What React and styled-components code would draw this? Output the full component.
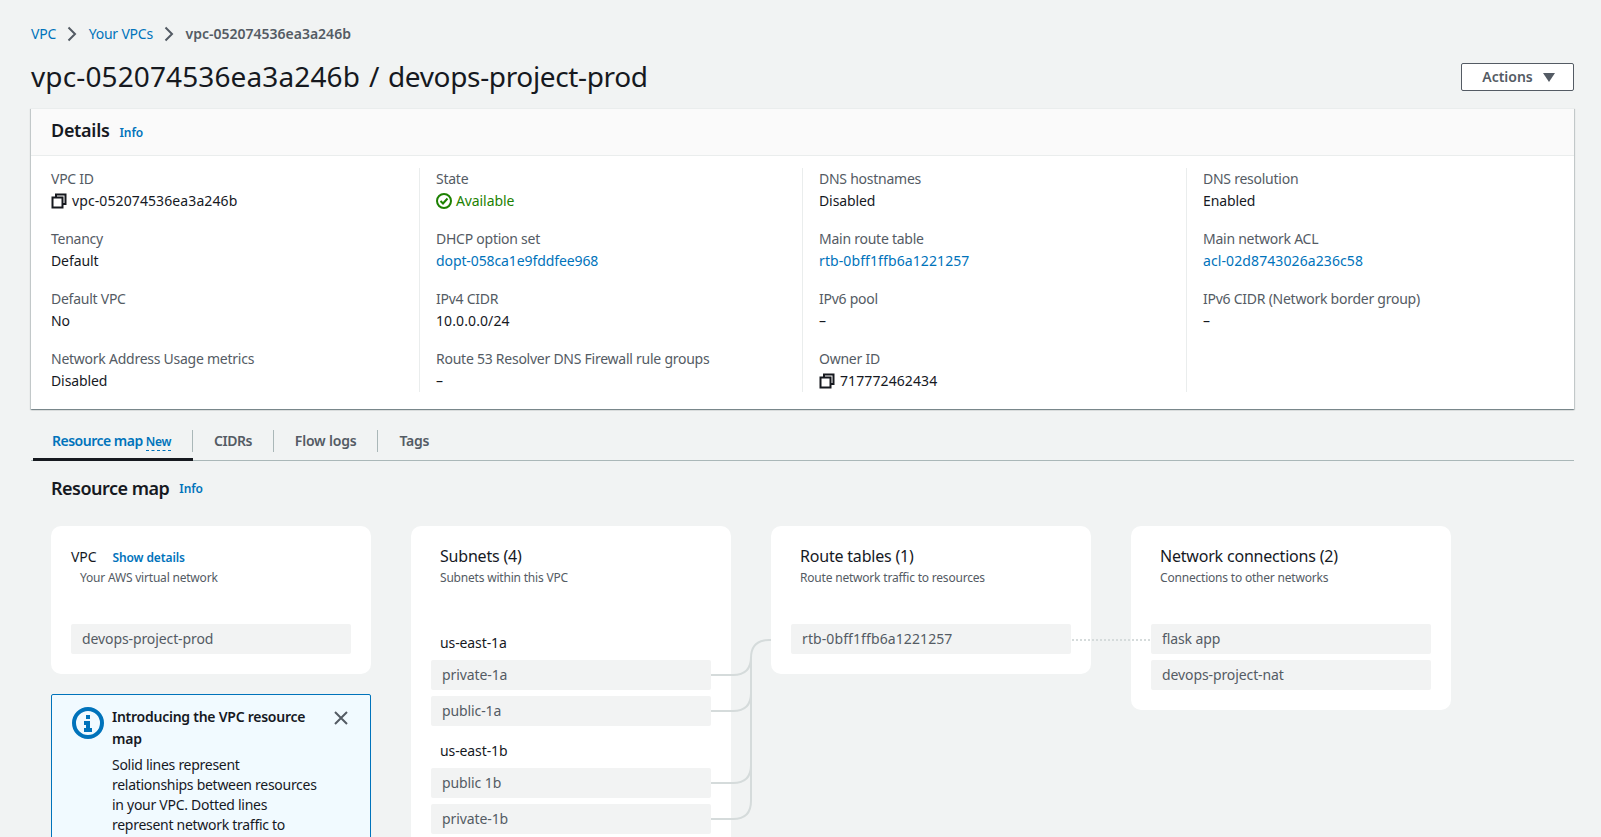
import React from "react";
import styled, { createGlobalStyle } from "styled-components";

const GlobalStyle = createGlobalStyle`
  html, body {
    margin: 0;
    height: 100%;
    overflow: hidden;
    background: #f1f3f3;
  }
  body {
    font-family: "Noto Sans", "Open Sans", Arial, sans-serif;
    font-size: 14px;
    line-height: 22px;
    letter-spacing: -0.1px;
    color: #16191f;
  }
`;

const Page = styled.div`
  height: 837px;
  overflow: hidden;
  padding: 23px 27px 0 31px;
  box-sizing: border-box;
`;

const Breadcrumbs = styled.nav`
  display: flex;
  align-items: center;
  height: 22px;
`;

const Crumb = styled.a`
  color: #0073bb;
  letter-spacing: -0.2px;
`;

const CurrentCrumb = styled.span`
  color: #545b64;
  font-weight: 600;
  letter-spacing: 0;
`;

const CrumbSep = styled.svg`
  width: 10px;
  height: 16px;
  margin: 0 11.5px 0 11px;
  fill: none;
  stroke: #545b64;
  stroke-width: 2;
`;

const PageHeader = styled.header`
  display: flex;
  align-items: center;
  justify-content: space-between;
  margin-top: 13px;
  height: 36px;
`;

const Title = styled.h1`
  margin: 0;
  font-size: 28px;
  line-height: 36px;
  font-weight: 400;
  letter-spacing: -0.35px;
  word-spacing: 2px;
`;

const TitleId = styled.span`
  letter-spacing: 0.12px;
`;

const ActionButton = styled.button`
  display: flex;
  align-items: center;
  justify-content: center;
  gap: 10px;
  width: 113px;
  height: 28px;
  margin-top: 2px;
  padding: 0 0 2px 2px;
  background: #fff;
  border: 1px solid #545b64;
  border-radius: 2px;
  color: #545b64;
  font: 600 14px "Noto Sans", sans-serif;
  letter-spacing: 0;
`;

const Caret = styled.span`
  width: 0;
  height: 0;
  margin-top: 2px;
  border-left: 6px solid transparent;
  border-right: 6px solid transparent;
  border-top: 9px solid #545b64;
`;

const Card = styled.section`
  margin-top: 14px;
  background: #fff;
  box-shadow: 0 1px 1px 0 rgba(0, 28, 36, 0.3), 1px 1px 1px 0 rgba(0, 28, 36, 0.15), -1px 1px 1px 0 rgba(0, 28, 36, 0.15);
  border-top: 1px solid #eaeded;
`;

const CardHeader = styled.div`
  display: flex;
  align-items: center;
  gap: 10px;
  height: 46px;
  padding-left: 20px;
  background: #fafafa;
  border-bottom: 1px solid #eaeded;
`;

const SectionTitle = styled.h2`
  margin: 0;
  font-size: 18px;
  line-height: 24px;
  font-weight: 600;
  letter-spacing: -0.5px;
`;

const DetailsTitle = styled(SectionTitle)`
  margin-top: -4px;
  letter-spacing: -0.3px;
`;

const InfoLink = styled.a`
  color: #0073bb;
  font-size: 12px;
  font-weight: 600;
  margin-top: 2px;
`;

const DetailGrid = styled.div`
  display: grid;
  grid-template-columns: 369px 383px repeat(2, 384px);
  padding: 12px 0 17px 20px;
`;

const DetailColumn = styled.div`
  display: flex;
  flex-direction: column;
  gap: 16px;
  ${({ $first }) => !$first && "border-left: 1px solid #eaeded; padding-left: 16px; margin-left: -1px;"}
`;

const DetailLabel = styled.div`
  color: #545b64;
  letter-spacing: -0.25px;
`;

const DetailValue = styled.div`
  display: flex;
  align-items: center;
  gap: ${({ $status }) => ($status ? "4px" : "5px")};
  height: 22px;
  letter-spacing: ${({ $id }) => ($id ? "0.1px" : "-0.1px")};
  color: ${({ $status }) => ($status ? "#1d8102" : "#16191f")};
`;

const DetailLink = styled.a`
  color: #0073bb;
`;

const CopyGlyph = styled.svg`
  width: 16px;
  height: 16px;
  fill: none;
  stroke: #16191f;
  stroke-width: 2;
`;

const StatusGlyph = styled.svg`
  width: 16px;
  height: 16px;
  fill: none;
  stroke: #1d8102;
  stroke-width: 2;
`;

const TabBar = styled.div`
  display: flex;
  margin-top: 13px;
  padding-left: 2px;
  border-bottom: 1px solid #aab7b8;
`;

const Tab = styled.div`
  padding: 8px 0 9px;
  margin-bottom: -1px;
  font-weight: 600;
  color: ${({ $active }) => ($active ? "#0073bb" : "#545b64")};
  box-shadow: ${({ $active }) => ($active ? "inset 0 -3px 0 #16191f" : "none")};
`;

const TabLabel = styled.span`
  display: block;
  height: 22px;
  padding: ${({ $first }) => ($first ? "0 21px 0 19px" : "0 21px")};
  letter-spacing: ${({ $tight }) => ($tight ? "-0.5px" : "-0.2px")};
  border-right: ${({ $last }) => ($last ? "none" : "1px solid #aab7b8")};
`;

const NewTag = styled.span`
  font-size: 12px;
  margin-left: 3px;
  letter-spacing: -0.3px;
  border-bottom: 1px dashed #0073bb;
`;

const MapHeading = styled.div`
  display: flex;
  align-items: center;
  gap: 10px;
  margin-top: 15px;
  padding-left: 20px;
`;

const ResourceMap = styled.div`
  position: relative;
  display: flex;
  align-items: flex-start;
  gap: 40px;
  margin-top: 26px;
  padding-left: 20px;
`;

const LeftColumn = styled.div`
  display: flex;
  flex-direction: column;
  gap: 20px;
  width: 320px;
`;

const MapCard = styled.div`
  width: 320px;
  box-sizing: border-box;
  padding: 20px;
  background: #fff;
  border-radius: 10px;
`;

const MapCardHead = styled.div`
  padding-left: ${({ $indent }) => $indent || 0}px;
  margin-bottom: 36px;
`;

const MapCardTitle = styled.div`
  font-size: 16px;
  line-height: 20px;
  margin-bottom: 2px;
  letter-spacing: -0.2px;
`;

const VpcTitle = styled.div`
  display: flex;
  align-items: center;
  gap: 16px;
  height: 22px;
`;

const ShowDetails = styled.a`
  margin-top: 2px;
  color: #0073bb;
  font-size: 12px;
  font-weight: 600;
  letter-spacing: -0.1px;
`;

const MapCardDesc = styled.div`
  margin-left: ${({ $indent }) => $indent || 0}px;
  color: #545b64;
  font-size: 12px;
  line-height: 20px;
  letter-spacing: -0.2px;
`;

const RowList = styled.div`
  display: flex;
  flex-direction: column;
  gap: 6px;
`;

const ZoneLabel = styled.div`
  margin-top: 8px;
  padding-left: 9px;
`;

const Resource = styled.div`
  height: 30px;
  padding-left: 11px;
  background: #f2f3f3;
  border-radius: 2px;
  color: #545b64;
  line-height: 30px;
  letter-spacing: ${({ $id }) => ($id ? "0.1px" : "-0.1px")};
`;

const Connectors = styled.svg`
  position: absolute;
  top: 0;
  left: 20px;
  width: 1200px;
  height: 320px;
  fill: none;
  stroke: #d5dbdb;
  stroke-width: 2;
  pointer-events: none;
`;

const Notice = styled.div`
  display: flex;
  gap: 8px;
  padding: 11px 21px 20px 20px;
  background: #f1faff;
  border: 1px solid #0073bb;
  border-radius: 2px;
`;

const NoticeGlyph = styled.svg`
  flex: none;
  width: 32px;
  height: 32px;
  margin-top: 1px;
`;

const NoticeBody = styled.div`
  flex: 1;
`;

const NoticeTitle = styled.div`
  max-width: 205px;
  font-weight: 600;
  margin-bottom: 5px;
  letter-spacing: -0.25px;
`;

const NoticeText = styled.div`
  max-width: 208px;
  line-height: 20px;
  letter-spacing: -0.28px;
`;

const CloseGlyph = styled.svg`
  flex: none;
  width: 16px;
  height: 16px;
  margin-top: 4px;
  fill: none;
  stroke: #545b64;
  stroke-width: 2;
`;

const Copy = () => (
  <CopyGlyph viewBox="0 0 16 16">
    <path d="M5 4V1.5h9.5V11H12" />
    <rect x="1.5" y="4.5" width="10" height="10" />
  </CopyGlyph>
);

const Chevron = () => (
  <CrumbSep viewBox="0 0 10 16">
    <path d="M1.5 1.5 8 8l-6.5 6.5" />
  </CrumbSep>
);

const columns = [
  [
    { label: "VPC ID", value: "vpc-052074536ea3a246b", copy: true, id: true },
    { label: "Tenancy", value: "Default" },
    { label: "Default VPC", value: "No" },
    { label: "Network Address Usage metrics", value: "Disabled" },
  ],
  [
    { label: "State", value: "Available", status: true },
    { label: "DHCP option set", value: "dopt-058ca1e9fddfee968", link: true },
    { label: "IPv4 CIDR", value: "10.0.0.0/24", id: true },
    { label: "Route 53 Resolver DNS Firewall rule groups", value: "–" },
  ],
  [
    { label: "DNS hostnames", value: "Disabled" },
    { label: "Main route table", value: "rtb-0bff1ffb6a1221257", link: true, id: true },
    { label: "IPv6 pool", value: "–" },
    { label: "Owner ID", value: "717772462434", copy: true, id: true },
  ],
  [
    { label: "DNS resolution", value: "Enabled" },
    { label: "Main network ACL", value: "acl-02d8743026a236c58", link: true, id: true },
    { label: "IPv6 CIDR (Network border group)", value: "–" },
  ],
];

const Detail = ({ label, value, copy, status, link, id }) => (
  <div>
    <DetailLabel>{label}</DetailLabel>
    <DetailValue $status={status} $id={id}>
      {copy && <Copy />}
      {status && (
        <StatusGlyph viewBox="0 0 16 16">
          <circle cx="8" cy="8" r="7" />
          <path d="M4.5 8 7 10.5 11.5 5.5" />
        </StatusGlyph>
      )}
      {link ? <DetailLink>{value}</DetailLink> : value}
    </DetailValue>
  </div>
);

export default function App() {
  return (
    <Page>
      <GlobalStyle />
      <Breadcrumbs>
        <Crumb>VPC</Crumb>
        <Chevron />
        <Crumb>Your VPCs</Crumb>
        <Chevron />
        <CurrentCrumb>vpc-052074536ea3a246b</CurrentCrumb>
      </Breadcrumbs>

      <PageHeader>
        <Title>
          <TitleId>vpc-052074536ea3a246b</TitleId> / devops-project-prod
        </Title>
        <ActionButton>
          Actions
          <Caret />
        </ActionButton>
      </PageHeader>

      <Card>
        <CardHeader>
          <DetailsTitle>Details</DetailsTitle>
          <InfoLink>Info</InfoLink>
        </CardHeader>
        <DetailGrid>
          {columns.map((items, i) => (
            <DetailColumn key={i} $first={i === 0}>
              {items.map((item) => (
                <Detail key={item.label} {...item} />
              ))}
            </DetailColumn>
          ))}
        </DetailGrid>
      </Card>

      <TabBar>
        <Tab $active>
          <TabLabel $first $tight>
            Resource map<NewTag>New</NewTag>
          </TabLabel>
        </Tab>
        <Tab>
          <TabLabel $tight>CIDRs</TabLabel>
        </Tab>
        <Tab>
          <TabLabel>Flow logs</TabLabel>
        </Tab>
        <Tab>
          <TabLabel $last>Tags</TabLabel>
        </Tab>
      </TabBar>

      <MapHeading>
        <SectionTitle>Resource map</SectionTitle>
        <InfoLink>Info</InfoLink>
      </MapHeading>

      <ResourceMap>
        <LeftColumn>
          <MapCard>
            <MapCardHead>
              <VpcTitle>
                VPC
                <ShowDetails>Show details</ShowDetails>
              </VpcTitle>
              <MapCardDesc $indent={9}>Your AWS virtual network</MapCardDesc>
            </MapCardHead>
            <RowList>
              <Resource>devops-project-prod</Resource>
            </RowList>
          </MapCard>
          <Notice>
            <NoticeGlyph viewBox="0 0 32 32">
              <circle cx="16" cy="16" r="14" fill="none" stroke="#0073bb" strokeWidth="4" />
              <rect x="14" y="8" width="4" height="4" fill="#0073bb" />
              <path d="M12 14h6v7h2v4h-8v-4h2v-3h-2z" fill="#0073bb" />
            </NoticeGlyph>
            <NoticeBody>
              <NoticeTitle>Introducing the VPC resource map</NoticeTitle>
              <NoticeText>
                Solid lines represent relationships between resources in your VPC. Dotted lines represent network traffic to
              </NoticeText>
            </NoticeBody>
            <CloseGlyph viewBox="0 0 16 16">
              <path d="M2 2l12 12M14 2 2 14" />
            </CloseGlyph>
          </Notice>
        </LeftColumn>

        <MapCard>
          <MapCardHead $indent={9}>
            <MapCardTitle>Subnets (4)</MapCardTitle>
            <MapCardDesc>Subnets within this VPC</MapCardDesc>
          </MapCardHead>
          <RowList>
            <ZoneLabel>us-east-1a</ZoneLabel>
            <Resource>private-1a</Resource>
            <Resource>public-1a</Resource>
            <ZoneLabel>us-east-1b</ZoneLabel>
            <Resource>public 1b</Resource>
            <Resource>private-1b</Resource>
          </RowList>
        </MapCard>

        <MapCard>
          <MapCardHead $indent={9}>
            <MapCardTitle>Route tables (1)</MapCardTitle>
            <MapCardDesc>Route network traffic to resources</MapCardDesc>
          </MapCardHead>
          <RowList>
            <Resource $id>rtb-0bff1ffb6a1221257</Resource>
          </RowList>
        </MapCard>

        <MapCard>
          <MapCardHead $indent={9}>
            <MapCardTitle>Network connections (2)</MapCardTitle>
            <MapCardDesc>Connections to other networks</MapCardDesc>
          </MapCardHead>
          <RowList>
            <Resource>flask app</Resource>
            <Resource>devops-project-nat</Resource>
          </RowList>
        </MapCard>

        <Connectors viewBox="0 0 1200 320">
          <path d="M660 149h22q18 0 18-18M660 185h22q18 0 18-18M660 257h22q18 0 18-18M660 293h22q18 0 18-18V132q0-18 18-18h2" />
          <path d="M1021 114h78" strokeDasharray="2 2" />
        </Connectors>
      </ResourceMap>
    </Page>
  );
}
